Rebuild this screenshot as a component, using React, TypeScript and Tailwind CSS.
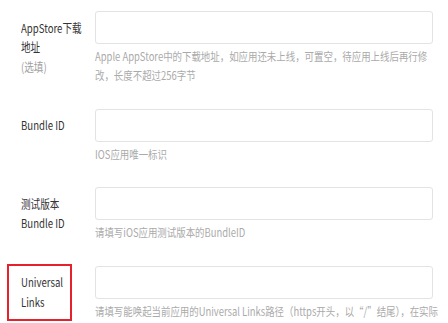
import React from 'react';

const font = { fontFamily: '"Noto Sans CJK SC", "Noto Sans", sans-serif' };

type Row = {
  label: React.ReactNode;
  help: React.ReactNode;
  highlight?: boolean;
};

const ROWS: Row[] = [
  {
    label: (
      <>
        AppStore下载
        <br />
        地址
        <br />
        <span className="text-[#a0a0a0]">(选填)</span>
      </>
    ),
    help: (
      <>
        Apple AppStore中的下载地址，如应用还未上线，可置空，待应用上线后再行修
        <br />
        改，长度不超过256字节
      </>
    ),
  },
  { label: 'Bundle ID', help: 'IOS应用唯一标识' },
  {
    label: (
      <>
        测试版本
        <br />
        Bundle ID
      </>
    ),
    help: '请填写iOS应用测试版本的BundleID',
  },
  {
    label: (
      <>
        Universal
        <br />
        Links
      </>
    ),
    help: '请填写能唤起当前应用的Universal Links路径（https开头，以“/”结尾），在实际',
    highlight: true,
  },
];

export default function App() {
  return (
    <div className="w-[448px] h-[323px] overflow-hidden bg-white pt-[11px]" style={font}>
      {ROWS.map((row, idx) => (
        <div key={idx} className="flex items-start mb-[23.5px]">
          {/* label */}
          <div className="w-[95px] shrink-0 pl-[7px]">
            <div
              className={
                'mt-[-2px] border-2 pl-[12px] pt-[6.5px] ' +
                (row.highlight ? 'w-[65px] pb-[8px] border-[#e5212b]' : 'border-transparent')
              }
            >
              <div className="origin-left scale-x-[0.8] text-[12px] leading-[19.5px] text-[#333] whitespace-nowrap">
                {row.label}
              </div>
            </div>
          </div>
          {/* field */}
          <div className="w-[338px]">
            <div className="h-[33px] rounded-[3px] border border-[#e3e3e3] bg-white" />
            <p className="mt-[3px] origin-left scale-x-[0.82] text-[11.5px] leading-[19px] text-[#aaa] whitespace-nowrap">
              {row.help}
            </p>
          </div>
        </div>
      ))}
    </div>
  );
}
